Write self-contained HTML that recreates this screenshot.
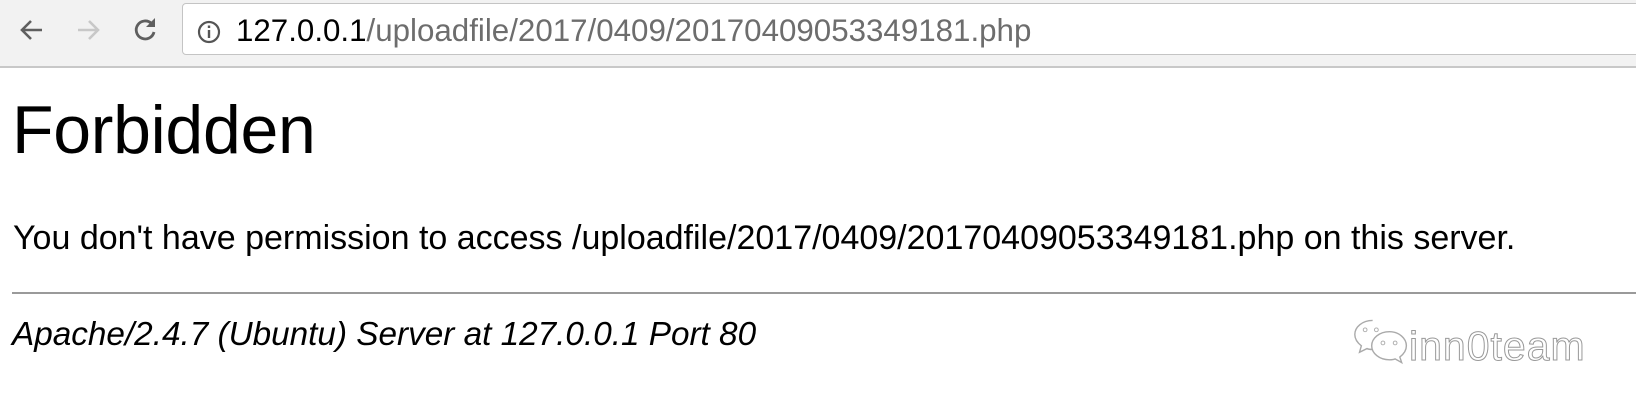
<!DOCTYPE html>
<html><head><meta charset="utf-8"><style>
html,body{margin:0;padding:0;background:#fff;width:1636px;height:414px;overflow:hidden;font-family:"Liberation Sans",Arial,sans-serif;}
.bar{position:absolute;left:0;top:0;width:1636px;height:66px;background:#f2f2f2;border-bottom:2px solid #c8c8c8;}
.url{position:absolute;left:182px;top:3px;width:1500px;height:52px;background:#fff;border:1px solid #c4c4c4;border-radius:4px;box-sizing:border-box;}
.urltext{position:absolute;top:12px;font-size:31.3px;color:#000;white-space:nowrap;line-height:38px;}
.urltext span{color:#6d6d6d}
svg{position:absolute}
h1{position:absolute;left:12px;top:90px;margin:0;font-size:68px;font-weight:normal;line-height:80px;letter-spacing:-0.3px}
p.msg{position:absolute;left:13px;top:218px;margin:0;font-size:34px;line-height:40px;white-space:nowrap}
.hr{position:absolute;left:12px;top:292px;width:1624px;height:2px;background:#9a9a9a}
.addr{position:absolute;left:12px;top:315px;font-size:33.3px;font-style:italic;line-height:40px;white-space:nowrap}
.wm{position:absolute;left:1409px;top:322px;font-size:41px;color:#fff;-webkit-text-stroke:1px #999;font-weight:300;letter-spacing:1px;line-height:48px}
</style></head><body>
<div class="bar">
<svg width="36" height="36" style="left:14px;top:12px" viewBox="0 0 36 36"><path d="M28 18H8M17 9l-9 9 9 9" fill="none" stroke="#5f5f5f" stroke-width="2.6"/></svg>
<svg width="36" height="36" style="left:70px;top:12px" viewBox="0 0 36 36"><path d="M8 18h20M19 9l9 9-9 9" fill="none" stroke="#c8c8c8" stroke-width="2.6"/></svg>
<svg width="36" height="36" style="left:128px;top:12px" viewBox="0 0 36 36"><path d="M26 20a9 9 0 1 1-2.5-8.5" fill="none" stroke="#5f5f5f" stroke-width="2.8"/><path d="M27 6v9h-9z" fill="#5f5f5f"/></svg>
<div class="url"></div>
<svg width="26" height="26" style="left:196px;top:19px" viewBox="0 0 26 26"><circle cx="13" cy="13" r="10" fill="none" stroke="#555" stroke-width="2.2"/><rect x="11.8" y="11" width="2.4" height="8" fill="#555"/><rect x="11.8" y="6.5" width="2.4" height="2.5" fill="#555"/></svg>
<div class="urltext" style="left:236px">127.0.0.1<span>/uploadfile/2017/0409/20170409053349181.php</span></div>
</div>
<h1>Forbidden</h1>
<p class="msg">You don't have permission to access /uploadfile/2017/0409/20170409053349181.php on this server.</p>
<div class="hr"></div>
<div class="addr">Apache/2.4.7 (Ubuntu) Server at 127.0.0.1 Port 80</div>
<svg width="60" height="52" style="left:1352px;top:316px" viewBox="0 0 64 54"><path d="M22 4C11 4 3 11 3 19c0 5 3 9 7 12l-2 7 8-4c2 1 4 1 6 1" fill="none" stroke="#aaa" stroke-width="1.5"/><path d="M40 16c-11 0-19 7-19 15s8 15 19 15c2 0 4 0 6-1l7 4-2-6c4-3 7-7 7-12 0-8-8-15-18-15z" fill="none" stroke="#aaa" stroke-width="1.5"/><circle cx="14" cy="14" r="2" fill="none" stroke="#aaa"/><circle cx="26" cy="14" r="2" fill="none" stroke="#aaa"/><circle cx="33" cy="28" r="2" fill="none" stroke="#aaa"/><circle cx="46" cy="28" r="2" fill="none" stroke="#aaa"/></svg>
<div class="wm">inn0team</div>
</body></html>
